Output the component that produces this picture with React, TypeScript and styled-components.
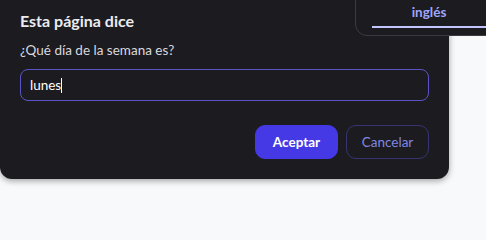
import React from 'react';
import styled, { createGlobalStyle } from 'styled-components';

const GlobalStyle = createGlobalStyle`
  html, body {
    margin: 0;
    padding: 0;
    background: #f8f9fb;
    font-family: Lato, "Noto Sans", sans-serif;
  }
`;

const App = () => {
  return (
    <Page>
      <GlobalStyle />
      <Dialog>
        <Title>Esta página dice</Title>
        <Message>¿Qué día de la semana es?</Message>
        <Field>
          lunes
          <Caret />
        </Field>
        <Actions>
          <Button primary>Aceptar</Button>
          <Button>Cancelar</Button>
        </Actions>
      </Dialog>
      <LanguagePanel>
        <Tab>inglés</Tab>
      </LanguagePanel>
    </Page>
  );
};

const Page = styled.div`
  position: relative;
  width: 486px;
  height: 239px;
  overflow: hidden;
`;

const Dialog = styled.div`
  width: 449px;
  box-sizing: border-box;
  padding: 10px 20px 20px;
  background: #1c1b20;
  border-radius: 0 0 12px 12px;
  box-shadow: 0 2px 6px rgba(0, 0, 0, 0.35);
  display: flex;
  flex-direction: column;
`;

const Title = styled.h2`
  margin: 0;
  font-size: 16px;
  font-weight: 700;
  line-height: 22px;
  color: #ececf0;
`;

const Message = styled.p`
  margin: 9px 0 0;
  font-size: 13.5px;
  line-height: 18px;
  color: #d8d8de;
`;

const Field = styled.div`
  margin-top: 10px;
  height: 32px;
  box-sizing: border-box;
  border: 1.5px solid #5a54c6;
  border-radius: 8px;
  padding: 0 9px;
  display: flex;
  align-items: center;
  font-size: 13.5px;
  color: #ffffff;
`;

const Caret = styled.span`
  display: inline-block;
  width: 1px;
  height: 15px;
  background: #ffffff;
`;

const Actions = styled.div`
  margin-top: 24px;
  display: flex;
  justify-content: flex-end;
  gap: 8px;
`;

const Button = styled.button<{ primary?: boolean }>`
  width: 83px;
  height: 34px;
  border-radius: 10px;
  font-family: inherit;
  font-size: 13.5px;
  font-weight: ${(p) => (p.primary ? 700 : 400)};
  cursor: pointer;
  background: ${(p) => (p.primary ? '#4539e6' : 'transparent')};
  color: ${(p) => (p.primary ? '#ffffff' : '#8088e2')};
  border: 1px solid ${(p) => (p.primary ? '#4539e6' : '#363572')};
`;

const LanguagePanel = styled.div`
  position: absolute;
  top: -1px;
  right: -1px;
  width: 132px;
  height: 37px;
  box-sizing: border-box;
  padding: 0 0 0 16px;
  background: #1c1b20;
  border: 1px solid #3c3b43;
  border-radius: 0 0 0 12px;
  display: flex;
`;

const Tab = styled.div`
  flex: 1;
  height: 28px;
  box-sizing: border-box;
  display: flex;
  align-items: center;
  justify-content: center;
  padding-bottom: 2px;
  font-size: 13.5px;
  font-weight: 700;
  color: #9ea6fb;
  border-bottom: 2px solid #c4c5ff;
`;

export default App;
